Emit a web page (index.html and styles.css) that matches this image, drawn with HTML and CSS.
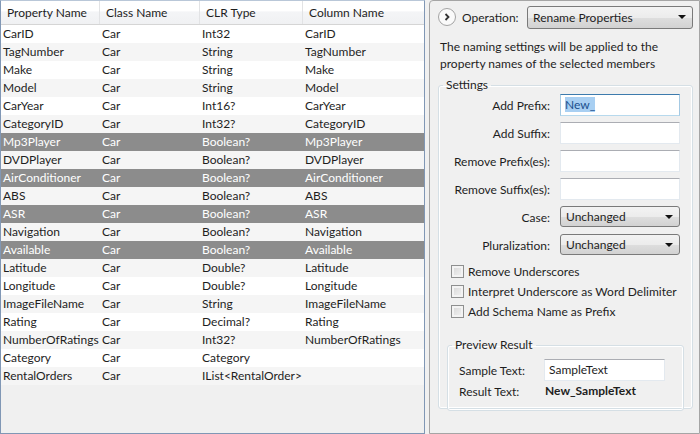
FILE: index.html
```html
<!DOCTYPE html>
<html>
<head>
<meta charset="utf-8">
<link rel="stylesheet" href="styles.css">
</head>
<body>
<div class="app">
  <div class="grid-panel">
    <div class="grid-row header">
      <div class="cell">Property Name</div>
      <div class="cell">Class Name</div>
      <div class="cell">CLR Type</div>
      <div class="cell">Column Name</div>
    </div>
    <div class="grid-row"><div class="cell">CarID</div><div class="cell">Car</div><div class="cell">Int32</div><div class="cell">CarID</div></div>
    <div class="grid-row alt"><div class="cell">TagNumber</div><div class="cell">Car</div><div class="cell">String</div><div class="cell">TagNumber</div></div>
    <div class="grid-row"><div class="cell">Make</div><div class="cell">Car</div><div class="cell">String</div><div class="cell">Make</div></div>
    <div class="grid-row alt"><div class="cell">Model</div><div class="cell">Car</div><div class="cell">String</div><div class="cell">Model</div></div>
    <div class="grid-row"><div class="cell">CarYear</div><div class="cell">Car</div><div class="cell">Int16?</div><div class="cell">CarYear</div></div>
    <div class="grid-row alt"><div class="cell">CategoryID</div><div class="cell">Car</div><div class="cell">Int32?</div><div class="cell">CategoryID</div></div>
    <div class="grid-row sel"><div class="cell">Mp3Player</div><div class="cell">Car</div><div class="cell">Boolean?</div><div class="cell">Mp3Player</div></div>
    <div class="grid-row alt"><div class="cell">DVDPlayer</div><div class="cell">Car</div><div class="cell">Boolean?</div><div class="cell">DVDPlayer</div></div>
    <div class="grid-row sel"><div class="cell">AirConditioner</div><div class="cell">Car</div><div class="cell">Boolean?</div><div class="cell">AirConditioner</div></div>
    <div class="grid-row alt"><div class="cell">ABS</div><div class="cell">Car</div><div class="cell">Boolean?</div><div class="cell">ABS</div></div>
    <div class="grid-row sel"><div class="cell">ASR</div><div class="cell">Car</div><div class="cell">Boolean?</div><div class="cell">ASR</div></div>
    <div class="grid-row alt"><div class="cell">Navigation</div><div class="cell">Car</div><div class="cell">Boolean?</div><div class="cell">Navigation</div></div>
    <div class="grid-row sel"><div class="cell">Available</div><div class="cell">Car</div><div class="cell">Boolean?</div><div class="cell">Available</div></div>
    <div class="grid-row alt"><div class="cell">Latitude</div><div class="cell">Car</div><div class="cell">Double?</div><div class="cell">Latitude</div></div>
    <div class="grid-row"><div class="cell">Longitude</div><div class="cell">Car</div><div class="cell">Double?</div><div class="cell">Longitude</div></div>
    <div class="grid-row alt"><div class="cell">ImageFileName</div><div class="cell">Car</div><div class="cell">String</div><div class="cell">ImageFileName</div></div>
    <div class="grid-row"><div class="cell">Rating</div><div class="cell">Car</div><div class="cell">Decimal?</div><div class="cell">Rating</div></div>
    <div class="grid-row alt"><div class="cell">NumberOfRatings</div><div class="cell">Car</div><div class="cell">Int32?</div><div class="cell">NumberOfRatings</div></div>
    <div class="grid-row"><div class="cell">Category</div><div class="cell">Car</div><div class="cell">Category</div><div class="cell"></div></div>
    <div class="grid-row alt"><div class="cell">RentalOrders</div><div class="cell">Car</div><div class="cell">IList&lt;RentalOrder&gt;</div><div class="cell"></div></div>
  </div>

  <div class="side-panel">
    <div class="op-row">
      <span class="expander">
        <svg width="18" height="18" viewBox="0 0 18 18"><circle cx="9" cy="9" r="8.5" fill="#fafafa" stroke="#a3a3a3"/><polyline points="7.5,6 10.5,9 7.5,12" fill="none" stroke="#333" stroke-width="1.8"/></svg>
      </span>
      <span class="op-label">Operation:</span>
      <div class="combo op-combo"><span>Rename Properties</span><span class="arrow"></span></div>
    </div>
    <p class="desc">The naming settings will be applied to the property names of the selected members</p>

    <fieldset class="group settings">
      <legend>Settings</legend>
      <div class="form">
        <label>Add Prefix:</label><div class="textbox focus"><span class="selected">New_</span></div>
        <label>Add Suffix:</label><div class="textbox"></div>
        <label>Remove Prefix(es):</label><div class="textbox"></div>
        <label>Remove Suffix(es):</label><div class="textbox"></div>
        <label>Case:</label><div class="combo small"><span>Unchanged</span><span class="arrow"></span></div>
        <label>Pluralization:</label><div class="combo small"><span>Unchanged</span><span class="arrow"></span></div>
      </div>
      <div class="checks">
        <div class="check"><span class="box"></span>Remove Underscores</div>
        <div class="check"><span class="box"></span>Interpret Underscore as Word Delimiter</div>
        <div class="check"><span class="box"></span>Add Schema Name as Prefix</div>
      </div>
      <fieldset class="group preview">
        <legend>Preview Result</legend>
        <div class="preview-grid">
          <span>Sample Text:</span><div class="textbox sample">SampleText</div>
          <span>Result Text:</span><b class="result">New_SampleText</b>
        </div>
      </fieldset>
    </fieldset>
  </div>
</div>
</body>
</html>
```
FILE: styles.css
```css
* { box-sizing: border-box; }
html, body { margin: 0; padding: 0; }
body {
  width: 700px;
  height: 434px;
  background: #f0f0f0;
  font-family: "Lato", "Noto Sans", sans-serif;
  font-size: 12px;
  color: #1e1e1e;
  overflow: hidden;
}
.app {
  display: flex;
  height: 434px;
  gap: 4px;
}
.grid-panel {
  width: 426px;
  height: 434px;
  border: 1px solid #8097b5;
  border-top-color: #b9c7d8;
  background: #f0f0f0;
}
.grid-row {
  display: grid;
  grid-template-columns: 99px 100px 103px 1fr;
  height: 18px;
  line-height: 18px;
  background: #ffffff;
  white-space: nowrap;
}
.grid-row.alt { background: #f5f5f5; }
.grid-row.sel { background: #8c8c8c; color: #ffffff; }
.grid-row .cell { padding-left: 2px; overflow: hidden; }
.grid-row.header {
  height: 24px;
  line-height: 23px;
  background: linear-gradient(#ffffff, #ffffff 45%, #f4f5f7 46%, #f0f1f3);
  border-bottom: 1px solid #d5d5d5;
}
.grid-row.header .cell {
  padding-left: 6px;
  border-right: 1px solid #e2e3e5;
}
.grid-row.header .cell:last-child { border-right: none; }

.side-panel {
  flex: 1;
  height: 434px;
  border: 1px solid #a5a5a5;
  border-radius: 4px 0 0 0;
  background: #f0f0f0;
  padding: 4px 6px 0 8px;
}
.op-row {
  display: flex;
  align-items: center;
  height: 24px;
}
.expander { width: 18px; height: 18px; display: block; }
.expander svg { display: block; }
.op-label { margin-left: 6px; width: 65px; }
.combo {
  display: flex;
  align-items: center;
  justify-content: space-between;
  border: 1px solid #7a7a7a;
  border-radius: 3px;
  background: linear-gradient(#f3f3f3, #ececec 50%, #dedede 51%, #d2d2d2);
  padding: 0 6px 0 5px;
}
.op-combo { width: 166px; height: 23px; }
.arrow {
  width: 0; height: 0;
  border-left: 4px solid transparent;
  border-right: 4px solid transparent;
  border-top: 4px solid #111;
}
.desc {
  margin: 9px 0 0 2px;
  line-height: 17px;
  width: 250px;
}
.group {
  border: 1px solid #d5dfe5;
  border-radius: 3px;
  box-shadow: inset 0 0 0 1px #ffffff;
  margin: 0;
  padding: 0;
}
.group legend {
  padding: 0 3px;
  margin-left: 4px;
  line-height: 14px;
}
.settings {
  margin-top: 6px;
  width: 255px;
  height: 331px;
}
.form {
  display: grid;
  grid-template-columns: 111px 120px;
  column-gap: 10px;
  row-gap: 6px;
  margin-top: 2px;
  align-items: center;
}
.form label { text-align: right; }
.textbox {
  height: 22px;
  border: 1px solid #abadb3;
  border-color: #abadb3 #e3e9ef #e3e9ef #e3e9ef;
  background: #ffffff;
  padding: 0 4px;
  line-height: 20px;
}
.textbox.focus { border-color: #3d7bad #a4c9e3 #b7d9ed #a4c9e3; }
.selected { background: #a8cff2; color: #1b4f8e; }
.combo.small { height: 21px; width: 120px; margin: 0 0 1px; }
.checks {
  margin: 8px 0 0 12px;
  display: flex;
  flex-direction: column;
  gap: 6px;
}
.check { display: flex; align-items: center; height: 14px; }
.box {
  width: 13px; height: 13px;
  border: 1px solid #8e8f8f;
  background: linear-gradient(135deg, #d6d6d6, #f4f4f4);
  box-shadow: inset 0 0 0 2px #f3f3f3;
  margin-right: 4px;
}
.preview {
  margin: 20px 0 0 8px;
  width: 237px;
  height: 73px;
}
.preview-grid {
  display: grid;
  grid-template-columns: 85px 121px;
  row-gap: 0;
  margin: 7px 0 0 11px;
  align-items: center;
}
.sample { height: 22px; }
.result { font-weight: bold; padding-left: 1px; line-height: 20px; }
```
